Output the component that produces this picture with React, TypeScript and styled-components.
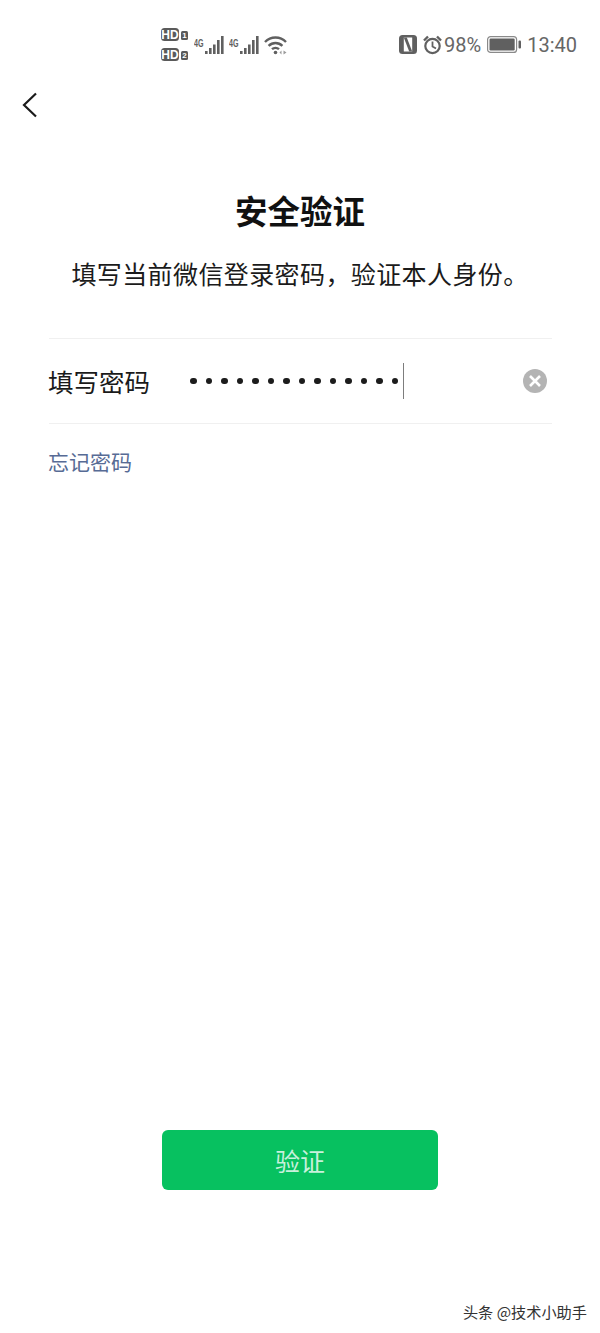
import React from "react";
import styled, { createGlobalStyle } from "styled-components";

const GlobalStyle = createGlobalStyle`
  html, body {
    margin: 0;
    padding: 0;
    background: #fff;
    font-family: "Noto Sans CJK SC", "Liberation Sans", sans-serif;
  }
`;

const Page = styled.div`
  width: 600px;
  height: 1333px;
  overflow: hidden;
  display: flex;
  flex-direction: column;
  background: #fff;
`;

const StatusBar = styled.div`
  height: 33px;
  margin-top: 28px;
  padding: 0 23px 0 161px;
  display: flex;
  align-items: center;
  justify-content: space-between;
  color: #606060;
`;

const StatusGroup = styled.div`
  display: flex;
  align-items: center;
`;

const StatusText = styled.span<{ $gap: number }>`
  font-family: Roboto, "Liberation Sans", sans-serif;
  font-size: 20px;
  line-height: 33px;
  margin-top: 2px;
  margin-left: ${(p) => p.$gap}px;
  color: #666;
`;

const IconSlot = styled.svg<{ $gap?: number }>`
  display: block;
  flex: none;
  margin-left: ${(p) => p.$gap || 0}px;
`;

const BackRow = styled.div`
  height: 26px;
  margin-top: 31px;
  padding-left: 22px;
`;

const Title = styled.h1`
  margin: 70px 0 0;
  text-align: center;
  font-size: 32.5px;
  line-height: 44px;
  font-weight: 700;
  color: #111;
`;

const Subtitle = styled.p`
  margin: 23px 0 0;
  text-align: center;
  font-size: 25px;
  line-height: 36px;
  letter-spacing: 0.4px;
  font-weight: 400;
  color: #1b1b1b;
`;

const Field = styled.div`
  margin: 47px 48px 0 49px;
  height: 84px;
  border-top: 1px solid #f0f0f0;
  border-bottom: 1px solid #f0f0f0;
  display: flex;
  align-items: center;
`;

const FieldLabel = styled.label`
  width: 142px;
  margin-left: -1px;
  flex: none;
  font-size: 25.5px;
  line-height: 36px;
  color: #1a1a1a;
`;

const Dots = styled.div`
  display: flex;
  gap: 9px;
`;

const Dot = styled.span`
  width: 6.5px;
  height: 6.5px;
  border-radius: 50%;
  background: #1c1c1c;
`;

const Caret = styled.span`
  width: 1px;
  height: 36px;
  margin-left: 5px;
  background: #7d7d7d;
`;

const ClearButton = styled.svg`
  margin-left: auto;
  margin-right: 5px;
  display: block;
`;

const ForgotLink = styled.a`
  margin: 22px 0 0 48px;
  font-size: 21px;
  line-height: 30px;
  color: #576b95;
`;

const VerifyButton = styled.button`
  align-self: center;
  margin-top: 654px;
  width: 276px;
  height: 60px;
  padding: 0;
  border: 0;
  border-radius: 6px;
  background: #07c160;
  color: rgba(255, 255, 255, 0.78);
  font-family: inherit;
  font-size: 25px;
`;

const Watermark = styled.div`
  margin-top: auto;
  padding: 0 13px 11px 0;
  text-align: right;
  font-size: 15.2px;
  line-height: 22px;
  color: #333;
`;

const HdBadge = ({ n }: { n: string }) => (
  <svg width="27" height="13" viewBox="0 0 27 13">
    <rect x="0" y="0" width="18" height="13" rx="3.5" fill="#5a5a5a" />
    <text x="9" y="10.8" textAnchor="middle" fontSize="12" fontWeight="700" fontFamily="Liberation Sans" fill="#fff">HD</text>
    <rect x="20" y="3" width="7" height="9" rx="1.5" fill="#5a5a5a" />
    <text x="23.5" y="10.4" textAnchor="middle" fontSize="8" fontWeight="700" fontFamily="Liberation Sans" fill="#fff">{n}</text>
  </svg>
);

const HdStack = styled.div`
  display: flex;
  flex-direction: column;
  gap: 7px;
`;

const Signal = ({ gap }: { gap: number }) => (
  <IconSlot $gap={gap} width="31" height="24" viewBox="0 0 31 24">
    <text x="0" y="14" fontSize="11" fontWeight="700" fontFamily="Liberation Sans" fill="#606060" textLength="9.5" lengthAdjust="spacingAndGlyphs">4G</text>
    <rect x="11" y="18" width="2.6" height="3" fill="#606060" />
    <rect x="15" y="15" width="2.6" height="6" fill="#606060" />
    <rect x="19" y="11.5" width="2.6" height="9.5" fill="#606060" />
    <rect x="23" y="7" width="2.6" height="14" fill="#606060" />
    <rect x="27" y="3" width="2.6" height="18" fill="#606060" />
  </IconSlot>
);

const Wifi = () => (
  <IconSlot $gap={4} width="24" height="20" viewBox="0 0 24 20" fill="none" stroke="#606060" strokeWidth="2.4">
    <path d="M1 7C6.8 1 16.2 1 22 7" />
    <path d="M4.6 10.8C8.5 7 14.5 7 18.4 10.8" />
    <path d="M8 14.2C10 12.4 13 12.4 15 14.2" />
    <circle cx="11.5" cy="17.5" r="1.8" fill="#606060" stroke="none" />
    <path d="M17.5 15.5v4l-2-2zM19.5 15.5v4l3-2z" fill="#9a9a9a" stroke="none" />
  </IconSlot>
);

const Nfc = () => (
  <IconSlot width="18" height="19" viewBox="0 0 18 19">
    <rect width="18" height="19" rx="3.5" fill="#606060" />
    <rect x="4.8" y="2.5" width="8.4" height="14" fill="#fff" />
    <path d="M4.8 2.5h3L13.2 16.5h-3z" fill="#606060" />
  </IconSlot>
);

const Alarm = () => (
  <IconSlot $gap={6} width="19" height="20" viewBox="0 0 19 20" fill="none" stroke="#606060" strokeWidth="2.2">
    <circle cx="9.5" cy="11" r="7.2" />
    <path d="M9.5 6.5V11.5L13 13.5" strokeWidth="1.8" />
    <path d="M1 5.5 5 1.5M18 5.5 14 1.5" strokeWidth="2.4" />
  </IconSlot>
);

const Battery = () => (
  <IconSlot $gap={6} width="34" height="17" viewBox="0 0 34 17">
    <rect x="0.6" y="0.6" width="29" height="15.8" rx="3" fill="none" stroke="#8a8a8a" strokeWidth="1.2" />
    <rect x="2.5" y="2.5" width="25.2" height="12" rx="1.2" fill="#606060" />
    <rect x="31.5" y="4.5" width="2.5" height="8" rx="1" fill="#606060" />
  </IconSlot>
);

const App: React.FC = () => {
  const dots = Array.from({ length: 14 });
  return (
    <Page>
      <GlobalStyle />
      <StatusBar>
        <StatusGroup>
          <HdStack>
            <HdBadge n="1" />
            <HdBadge n="2" />
          </HdStack>
          <Signal gap={6} />
          <Signal gap={4} />
          <Wifi />
        </StatusGroup>
        <StatusGroup>
          <Nfc />
          <Alarm />
          <StatusText $gap={2}>98%</StatusText>
          <Battery />
          <StatusText $gap={6}>13:40</StatusText>
        </StatusGroup>
      </StatusBar>

      <BackRow>
        <svg width="16" height="26" viewBox="0 0 16 26" fill="none" stroke="#1a1a1a" strokeWidth="2.2">
          <path d="M14 1.5 2 13l12 11.5" />
        </svg>
      </BackRow>

      <Title>安全验证</Title>
      <Subtitle>{"填写当前微信登录密码\uFF0C验证本人身份。"}</Subtitle>

      <Field>
        <FieldLabel>填写密码</FieldLabel>
        <Dots>
          {dots.map((_, i) => (
            <Dot key={i} />
          ))}
        </Dots>
        <Caret />
        <ClearButton width="24" height="24" viewBox="0 0 24 24">
          <circle cx="12" cy="12" r="12" fill="#b4b4b4" />
          <path d="M7 7l10 10M17 7L7 17" stroke="#fff" strokeWidth="2.6" />
        </ClearButton>
      </Field>

      <ForgotLink>忘记密码</ForgotLink>

      <VerifyButton>验证</VerifyButton>

      <Watermark>头条 @技术小助手</Watermark>
    </Page>
  );
};

export default App;
